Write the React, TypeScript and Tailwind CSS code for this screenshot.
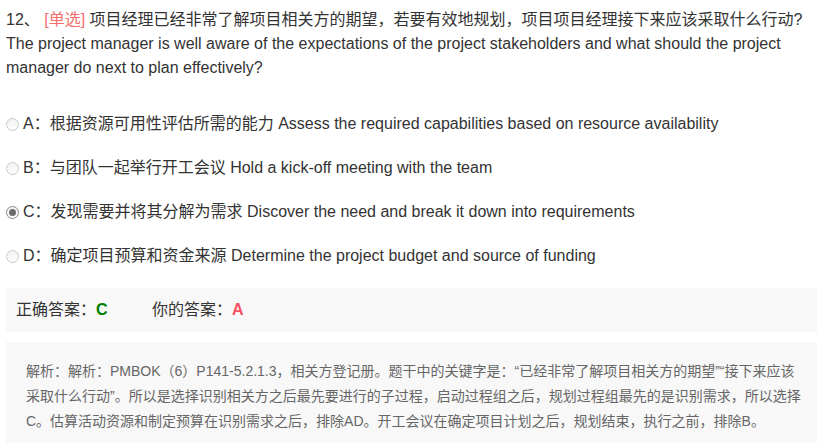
type Option = {
  key: string;
  zh: string;
  en: string;
  checked?: boolean;
};

const options: Option[] = [
  { key: "A", zh: "根据资源可用性评估所需的能力", en: "Assess the required capabilities based on resource availability" },
  { key: "B", zh: "与团队一起举行开工会议", en: "Hold a kick-off meeting with the team" },
  { key: "C", zh: "发现需要并将其分解为需求", en: "Discover the need and break it down into requirements", checked: true },
  { key: "D", zh: "确定项目预算和资金来源", en: "Determine the project budget and source of funding" },
];

const font = { fontFamily: '"Liberation Sans", Arial, "Noto Sans CJK SC", sans-serif' };

function Radio({ checked }: { checked?: boolean }) {
  return (
    <span
      className={`inline-flex items-center justify-center w-[13px] h-[13px] rounded-full border bg-gradient-to-b from-[#f2f2f2] to-white ${
        checked ? "border-[#8a8a8a]" : "border-[#c9c9c9]"
      }`}
    >
      {checked && <span className="w-[7px] h-[7px] rounded-full bg-[#6b6b6b]" />}
    </span>
  );
}

export default function App() {
  return (
    <div className="min-h-[443px] bg-white pl-[6px] pt-[8px] text-[#333] overflow-hidden" style={font}>
      {/* Question */}
      <div className="text-[16px] leading-[24px] pr-[10px]">
        <span>12、 </span>
        <span className="text-[#f56c6c]">[单选]</span>{" "}
        项目经理已经非常了解项目相关方的期望，若要有效地规划，项目项目经理接下来应该采取什么行动?
        <br />
        The project manager is well aware of the expectations of the project stakeholders and what should the project manager do next to plan effectively?
      </div>

      {/* Options */}
      <div className="mt-[32px] flex flex-col gap-[20px]">
        {options.map((o) => (
          <div key={o.key} className="flex items-center text-[16px] leading-[24px] whitespace-nowrap">
            <Radio checked={o.checked} />
            <span className="ml-[4px]">
              {o.key}：{o.zh} {o.en}
            </span>
          </div>
        ))}
      </div>

      {/* Answer */}
      <div className="mt-[20px] h-[44px] bg-[#f8f8f8] flex items-center pl-[10px] text-[16px]">
        <span>正确答案：</span>
        <span className="font-bold text-[#008000] w-[56px]">C</span>
        <span>你的答案：</span>
        <span className="font-bold text-[#f5515f]">A</span>
      </div>

      {/* Analysis */}
      <div className="mt-[10px] bg-[#f8f8f8] pl-[20px] pr-[15px] pt-[17px] pb-[20px] text-[14px] leading-[25px] text-[#666]">
        解析：解析：PMBOK（6）P141-5.2.1.3，相关方登记册。题干中的关键字是：“已经非常了解项目相关方的期望”“接下来应该采取什么行动”。所以是选择识别相关方之后最先要进行的子过程，启动过程组之后，规划过程组最先的是识别需求，所以选择C。估算活动资源和制定预算在识别需求之后，排除AD。开工会议在确定项目计划之后，规划结束，执行之前，排除B。
      </div>
    </div>
  );
}
